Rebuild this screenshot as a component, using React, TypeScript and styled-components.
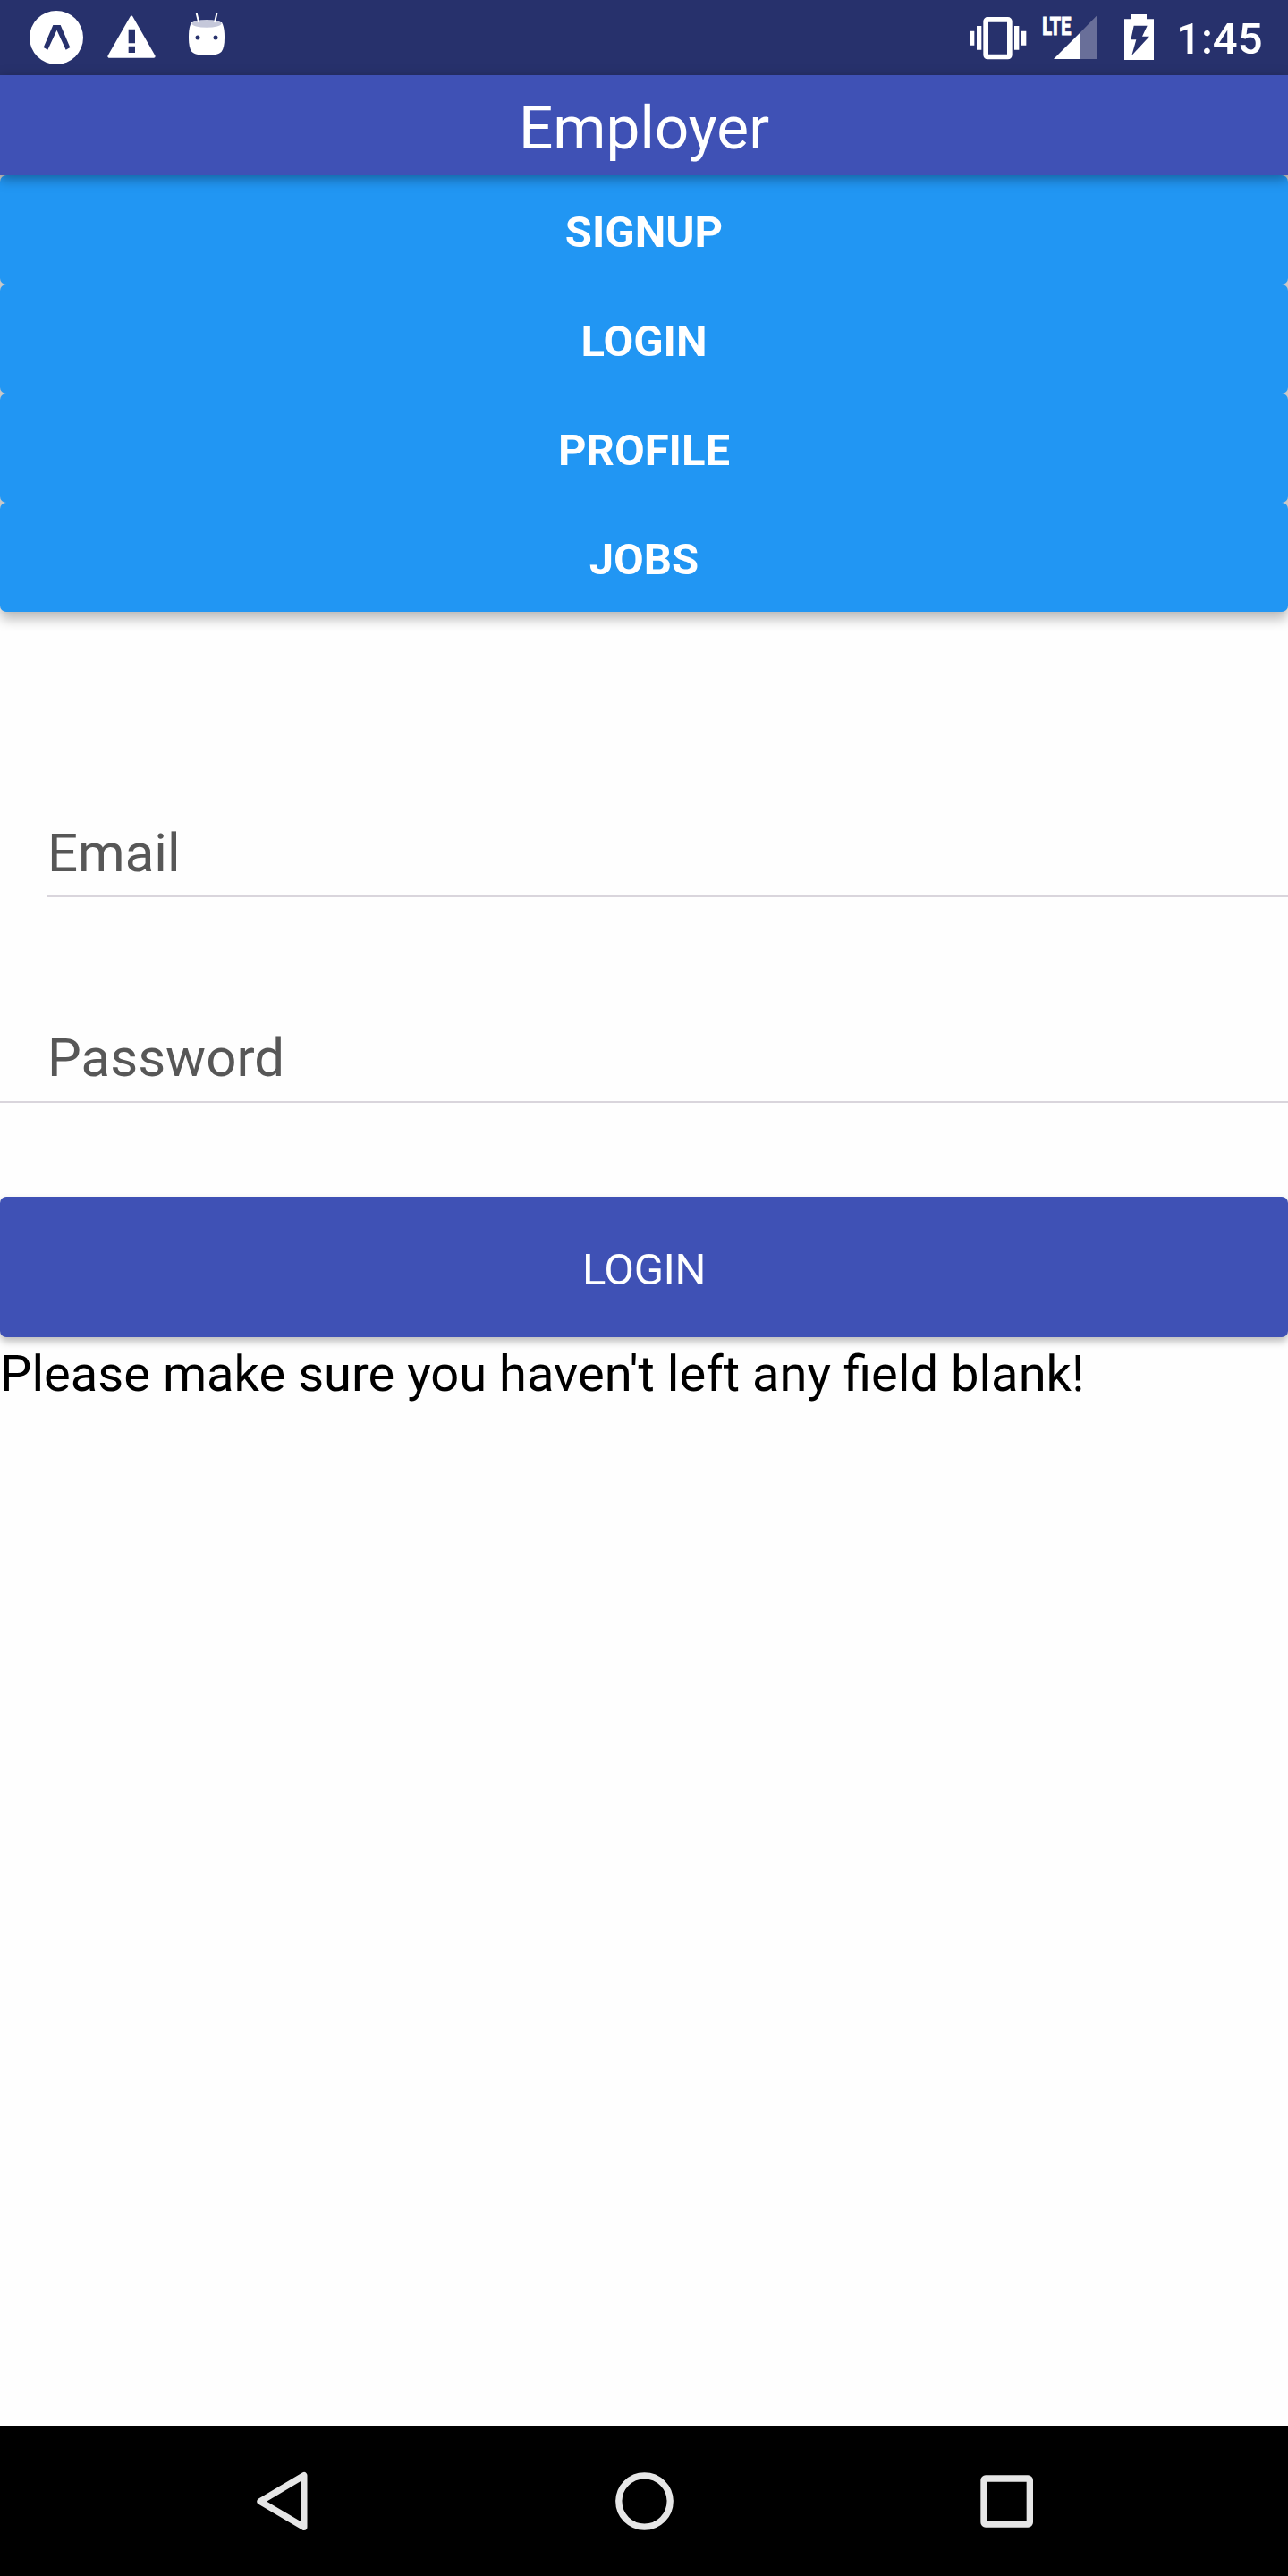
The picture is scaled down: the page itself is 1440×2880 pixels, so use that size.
import React from "react";
import styled, { createGlobalStyle } from "styled-components";

const GlobalStyle = createGlobalStyle`
  body {
    margin: 0;
    background: #ffffff;
    font-family: Roboto, "Liberation Sans", sans-serif;
  }
`;

const Screen = styled.div`
  display: flex;
  flex-direction: column;
  width: 1440px;
  height: 2880px;
  overflow: hidden;
  background: #fefefe;
`;

const StatusBar = styled.div`
  display: flex;
  justify-content: space-between;
  flex: none;
  height: 84px;
  background: #27316c;
`;

const StatusGroup = styled.div<{ $side: "left" | "right" }>`
  display: flex;
  align-items: flex-start;
  padding-left: ${(p) => (p.$side === "left" ? "33px" : "0")};
  padding-right: ${(p) => (p.$side === "right" ? "28.5px" : "0")};
`;

const StatusIcon = styled.svg<{ $top: number; $gap: number }>`
  display: block;
  flex: none;
  margin-top: ${(p) => p.$top}px;
  margin-right: ${(p) => p.$gap}px;
  overflow: visible;
`;

const Clock = styled.span`
  font-size: 49px;
  font-weight: 500;
  line-height: 84px;
  padding-top: 2px;
  color: #ffffff;
`;

const Header = styled.header`
  position: relative;
  z-index: 1;
  display: flex;
  flex: none;
  align-items: center;
  justify-content: center;
  box-sizing: border-box;
  height: 112px;
  padding-top: 6px;
  background: #3f51b5;
  box-shadow: 0 4px 13px rgba(0, 0, 0, 0.36);
`;

const Title = styled.h1`
  margin: 0;
  font-size: 67.5px;
  font-weight: 400;
  line-height: 80px;
  color: #ffffff;
`;

const Menu = styled.nav`
  display: flex;
  flex: none;
  flex-direction: column;
  background: #c8c8c8;
  border-radius: 0 0 7px 7px;
  box-shadow: 0 8px 14px rgba(0, 0, 0, 0.28);
`;

const MenuButton = styled.button`
  height: 122px;
  padding: 4px 0 0;
  border: 0;
  border-radius: 7px;
  background: #2196f3;
  color: #ffffff;
  font-family: inherit;
  font-size: 49px;
  font-weight: 700;
`;

const Form = styled.form`
  display: flex;
  flex: 1;
  flex-direction: column;
  padding-top: 144px;
`;

const Field = styled.label<{ $inset?: boolean }>`
  display: flex;
  flex: none;
  align-items: flex-end;
  box-sizing: border-box;
  height: 175px;
  margin-left: ${(p) => (p.$inset ? "53px" : "0")};
  margin-bottom: ${(p) => (p.$inset ? "55px" : "105px")};
  padding-left: ${(p) => (p.$inset ? "0" : "53px")};
  padding-bottom: ${(p) => (p.$inset ? "12px" : "13px")};
  border-bottom: 2px solid #d9d5dc;
  font-size: 60px;
  line-height: 70px;
  color: #575757;
`;

const SubmitButton = styled.button`
  flex: none;
  height: 157px;
  padding: 6px 0 0;
  border: 0;
  border-radius: 7px;
  background: #3f51b5;
  box-shadow: 0 5px 8px rgba(0, 0, 0, 0.26);
  color: #ffffff;
  font-family: inherit;
  font-size: 49px;
  letter-spacing: -0.4px;
`;

const Message = styled.p`
  position: relative;
  margin: 8px 0 0;
  font-size: 56.1px;
  line-height: 66px;
  color: #000000;
`;

const NavBar = styled.footer`
  display: flex;
  flex: none;
  align-items: center;
  justify-content: center;
  height: 168px;
  background: #000000;
`;

const NavSlot = styled.div`
  display: flex;
  justify-content: center;
  width: 405px;
`;

const NavIcon = styled.svg`
  display: block;
  width: 84px;
  height: 84px;
  fill: none;
  stroke: #e6e6e6;
  stroke-width: 22px;
`;

const BAR = "#27316c";

const ExpoIcon = () => (
  <StatusIcon $top={12} $gap={27} width="60" height="60" viewBox="99 36 180 180">
    <circle cx="189" cy="126" r="90" fill="#fff" />
    <path d="M178 84H203L235 159L221 167L190.500 101L160 167L146 159Z" fill={BAR} />
  </StatusIcon>
);

const WarningIcon = () => (
  <StatusIcon $top={17} $gap={36} width="54" height="48" viewBox="360 51 162 144">
    <path d="M441 58L366 189H516Z" fill="#fff" stroke="#fff" strokeWidth="10" strokeLinejoin="round" />
    <path d="M431 98H453V145H431ZM431 155H453V177H431Z" fill={BAR} />
  </StatusIcon>
);

const RobotIcon = () => (
  <StatusIcon $top={14} $gap={0} width="42" height="50" viewBox="630 42 126 150">
    <path
      d="M642 75C633 92 633 112 633 128C633 148 636 163 643 173C651 182 673 186 693 186C713 186 735 182 743 173C750 163 753 148 753 128C753 112 753 92 744 75Z"
      fill="#fff"
    />
    <ellipse cx="693" cy="79" rx="50" ry="13" fill="#c5c8da" />
    <path d="M659.500 46L666 73M727 46L720.500 73" stroke="#fff" strokeWidth="6" strokeLinecap="round" />
    <circle cx="663" cy="126" r="7.500" fill={BAR} />
    <circle cx="723" cy="126" r="7.500" fill={BAR} />
  </StatusIcon>
);

const VibrateIcon = () => (
  <StatusIcon $top={19} $gap={17.3} width="64" height="48" viewBox="72 57 192 144">
    <rect x="126.500" y="65.500" width="80" height="125" rx="6" fill="none" stroke="#fff" strokeWidth="17" />
    <path d="M96 87h16v80h-16zM72 104h16v48h-16zM222 87h16v80h-16zM246 104h16v48h-16z" fill="#fff" />
  </StatusIcon>
);

const SignalIcon = () => (
  <StatusIcon $top={17} $gap={29.7} width="62" height="50" viewBox="316 51 186 150">
    <path d="M443 110L501 51V198H443Z" fill="#696f99" />
    <path d="M355 198L443 110V198Z" fill="#fff" />
    <text
      x="317"
      y="116"
      fill="#fff"
      stroke="#fff"
      strokeWidth="3.5"
      fontFamily="Roboto, sans-serif"
      fontSize="84"
      fontWeight="700"
      textLength="96"
      lengthAdjust="spacingAndGlyphs"
    >
      LTE
    </text>
  </StatusIcon>
);

const BatteryIcon = () => (
  <StatusIcon $top={16} $gap={25.5} width="33" height="51" viewBox="591 48 99 153">
    <path d="M615 48H666V64H690V201H591V64H615Z" fill="#fff" />
    <path d="M623 86H668L651 122H675L616 186L631 133H613Z" fill={BAR} />
  </StatusIcon>
);

const menuItems = ["SIGNUP", "LOGIN", "PROFILE", "JOBS"];

export default function App() {
  return (
    <>
      <GlobalStyle />
      <Screen>
        <StatusBar>
          <StatusGroup $side="left">
            <ExpoIcon />
            <WarningIcon />
            <RobotIcon />
          </StatusGroup>
          <StatusGroup $side="right">
            <VibrateIcon />
            <SignalIcon />
            <BatteryIcon />
            <Clock>1:45</Clock>
          </StatusGroup>
        </StatusBar>
        <Header>
          <Title>Employer</Title>
        </Header>
        <Menu>
          {menuItems.map((item) => (
            <MenuButton key={item}>{item}</MenuButton>
          ))}
        </Menu>
        <Form>
          <Field $inset>Email</Field>
          <Field>Password</Field>
          <SubmitButton type="button">LOGIN</SubmitButton>
          <Message>Please make sure you haven't left any field blank!</Message>
        </Form>
        <NavBar>
          <NavSlot>
            <NavIcon viewBox="39 192 252 252">
              <path d="M239.500 233V406L93 320Z" strokeLinejoin="round" />
            </NavIcon>
          </NavSlot>
          <NavSlot>
            <NavIcon viewBox="1254 192 252 252">
              <circle cx="1381.500" cy="319.500" r="86" />
            </NavIcon>
          </NavSlot>
          <NavSlot>
            <NavIcon viewBox="69 162 252 252">
              <rect x="120" y="213" width="154" height="153" rx="6" />
            </NavIcon>
          </NavSlot>
        </NavBar>
      </Screen>
    </>
  );
}
